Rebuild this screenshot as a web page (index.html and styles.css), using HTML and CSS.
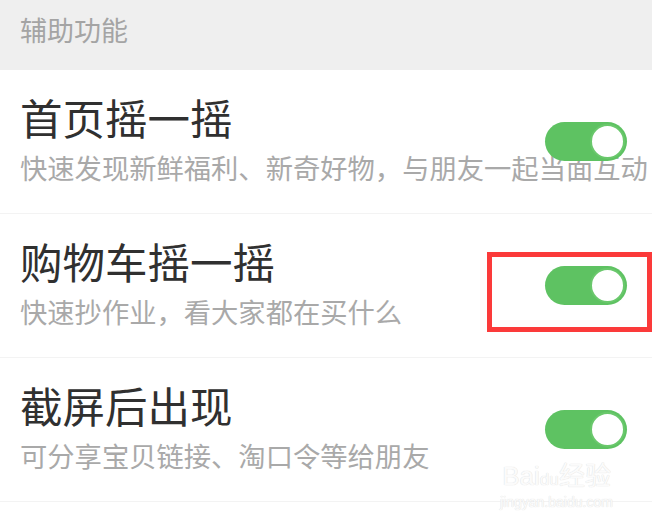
FILE: index.html
```html
<!DOCTYPE html>
<html lang="zh-CN">
<head>
<meta charset="utf-8">
<link rel="stylesheet" href="styles.css">
</head>
<body>
<div class="page">
  <div class="section-header">辅助功能</div>
  <div class="row">
    <div class="texts">
      <div class="title">首页摇一摇</div>
      <div class="desc">快速发现新鲜福利、新奇好物，与朋友一起当面互动</div>
    </div>
    <div class="toggle"><div class="knob"></div></div>
  </div>
  <div class="row">
    <div class="texts">
      <div class="title">购物车摇一摇</div>
      <div class="desc">快速抄作业，看大家都在买什么</div>
    </div>
    <div class="toggle"><div class="knob"></div></div>
    <div class="highlight"></div>
  </div>
  <div class="row">
    <div class="texts">
      <div class="title">截屏后出现</div>
      <div class="desc">可分享宝贝链接、淘口令等给朋友</div>
    </div>
    <div class="toggle"><div class="knob"></div></div>
    <div class="watermark">
      <div class="wm-logo">Bai<span class="wm-du">du</span>经验</div>
      <div class="wm-url">jingyan.baidu.com</div>
    </div>
  </div>
</div>
</body>
</html>
```

FILE: styles.css
```css
html, body {
  margin: 0;
  padding: 0;
  background: #ffffff;
}
body {
  width: 652px;
  height: 516px;
  overflow: hidden;
  font-family: "Noto Sans CJK SC", "Noto Sans", sans-serif;
}
.page {
  display: flex;
  flex-direction: column;
}
.section-header {
  height: 70px;
  box-sizing: border-box;
  background: #efefef;
  color: #a4a4a4;
  font-size: 27px;
  line-height: 60px;
  padding-left: 20px;
}
.row {
  position: relative;
  display: flex;
  align-items: center;
  height: 144px;
  box-sizing: border-box;
  padding: 0 25px 0 20px;
  border-bottom: 1px solid #f3f3f3;
}
.texts {
  flex: 1;
  display: flex;
  flex-direction: column;
  white-space: nowrap;
  min-width: 0;
}
.title {
  font-size: 42.5px;
  line-height: 50px;
  color: #303030;
}
.desc {
  font-size: 27.3px;
  line-height: 50px;
  color: #a9a9a9;
}
.toggle {
  position: relative;
  z-index: 1;
  flex: none;
  width: 82px;
  height: 39px;
  border-radius: 20px;
  background: #5ec262;
  display: flex;
  align-items: center;
  justify-content: flex-end;
  padding-right: 2px;
  box-sizing: border-box;
}
.knob {
  width: 35px;
  height: 35px;
  border-radius: 50%;
  background: #ffffff;
  box-sizing: border-box;
  border: 2px solid #6ac86c;
}
.highlight {
  position: absolute;
  left: 487px;
  top: 38px;
  width: 165px;
  height: 80px;
  box-sizing: border-box;
  border: 5px solid #fb3a3a;
}
.watermark {
  position: absolute;
  left: 500px;
  top: 104px;
  color: #fbfbfb;
  text-shadow: 0 0 1px #e2e2e2, 0 0 1px #e2e2e2;
  font-family: "Liberation Sans", sans-serif;
  text-align: center;
}
.wm-logo {
  font-size: 26px;
  line-height: 28px;
}
.wm-du {
  font-size: 17px;
}
.wm-url {
  font-size: 14px;
  line-height: 16px;
}
```
